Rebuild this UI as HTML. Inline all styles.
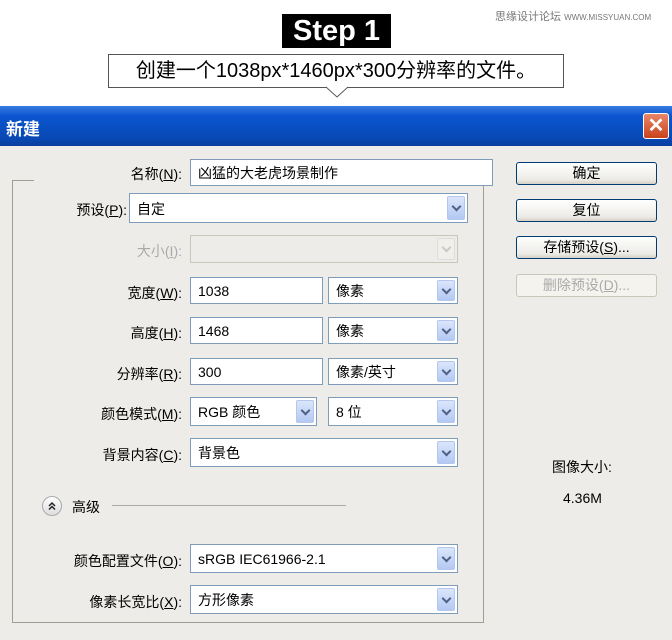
<!DOCTYPE html>
<html><head><meta charset="utf-8"><style>
*{margin:0;padding:0;box-sizing:border-box}
body{width:672px;height:640px;background:#fff;position:relative;overflow:hidden;font-family:"Liberation Sans","Noto Sans CJK SC",sans-serif;font-size:14px;color:#000}
.a{position:absolute}
.lbl{position:absolute;right:490px;text-align:right;white-space:nowrap;font-size:14px}
.in{position:absolute;background:#fff;border:1px solid #7f9db9;padding-left:7px;padding-top:2px;font-size:14px;white-space:nowrap}
.dd{position:absolute;right:2px;top:2px;bottom:2px;width:18px;background:linear-gradient(#dbe6fb,#b3c8f3);border:1px solid #b4c7ee;border-radius:2px}
.dd::after{content:"";position:absolute;left:5px;top:50%;margin-top:-5px;width:5px;height:5px;border-right:2px solid #4d6185;border-bottom:2px solid #4d6185;transform:rotate(45deg)}
.dis::after{border-color:#c8c8c8}
.btn{position:absolute;left:516px;width:141px;height:23px;border:1px solid #003c74;border-radius:3px;background:linear-gradient(#fff,#ecebe6 80%,#d6d0c5);text-align:center;font-size:14px;line-height:21px}
</style></head><body>
<div class="a" style="left:282px;top:14px;width:109px;height:34px;background:#000;color:#fff;font-weight:bold;font-size:29px;text-align:center;line-height:34px">Step 1</div>
<div class="a" style="left:495px;top:8px;font-size:11px;color:#777">思缘设计论坛 <span style="font-size:8px">WWW.MISSYUAN.COM</span></div>
<div class="a" style="left:108px;top:54px;width:456px;height:34px;border:1px solid #555;background:#fff;font-size:20px;text-align:center;line-height:32px">创建一个1038px*1460px*300分辨率的文件。</div>
<svg class="a" style="left:326px;top:86px" width="22" height="12"><path d="M0 1 L11 11 L22 1" fill="#fff" stroke="#555"/></svg>
<div class="a" style="left:0;top:106px;width:672px;height:40px;background:linear-gradient(#3a7be0,#0a55d0 25%,#0849b5 80%,#0a3e9c);"></div>
<div class="a" style="left:6px;top:115px;color:#fff;font-weight:bold;font-size:17px">新建</div>
<div class="a" style="left:643px;top:113px;width:26px;height:26px;background:linear-gradient(#e8866a,#c9431c);border:1px solid #fff;border-radius:3px;color:#fff;font-size:20px;font-weight:bold;text-align:center;line-height:24px">✕</div>
<div class="a" style="left:0;top:146px;width:672px;height:494px;background:#eeece8"></div>
<div class="a" style="left:12px;top:180px;width:472px;height:443px;border:1px solid #a09d94;border-top:none"></div>
<div class="a" style="left:12px;top:180px;width:22px;border-top:1px solid #a09d94"></div>
<div class="a" style="left:474px;top:180px;width:10px;border-top:1px solid #a09d94"></div>

<div class="lbl" style="top:164px">名称(<u>N</u>):</div>
<div class="in" style="left:190px;top:159px;width:303px;height:27px;line-height:23px">凶猛的大老虎场景制作</div>
<div class="lbl" style="top:200px;right:545px">预设(<u>P</u>):</div>
<div class="in" style="left:129px;top:193px;width:339px;height:30px;line-height:26px">自定<div class="dd"></div></div>
<div class="lbl" style="top:241px;color:#aaa">大小(<u>I</u>):</div>
<div class="in" style="left:190px;top:235px;width:268px;height:28px;background:#eeece8;border-color:#c9c7ba"><div class="dd dis" style="background:#f0efea;border-color:#ddd"></div></div>
<div class="lbl" style="top:283px">宽度(<u>W</u>):</div>
<div class="in" style="left:190px;top:277px;width:133px;height:27px;line-height:23px">1038</div>
<div class="in" style="left:328px;top:277px;width:130px;height:27px;line-height:23px">像素<div class="dd"></div></div>
<div class="lbl" style="top:323px">高度(<u>H</u>):</div>
<div class="in" style="left:190px;top:317px;width:133px;height:27px;line-height:23px">1468</div>
<div class="in" style="left:328px;top:317px;width:130px;height:27px;line-height:23px">像素<div class="dd"></div></div>
<div class="lbl" style="top:364px">分辨率(<u>R</u>):</div>
<div class="in" style="left:190px;top:358px;width:133px;height:27px;line-height:23px">300</div>
<div class="in" style="left:328px;top:358px;width:130px;height:27px;line-height:23px">像素/英寸<div class="dd"></div></div>
<div class="lbl" style="top:404px">颜色模式(<u>M</u>):</div>
<div class="in" style="left:190px;top:397px;width:127px;height:29px;line-height:25px">RGB 颜色<div class="dd"></div></div>
<div class="in" style="left:328px;top:397px;width:130px;height:29px;line-height:25px">8 位<div class="dd"></div></div>
<div class="lbl" style="top:445px">背景内容(<u>C</u>):</div>
<div class="in" style="left:190px;top:438px;width:268px;height:29px;line-height:25px">背景色<div class="dd"></div></div>
<div class="a" style="left:42px;top:496px;width:20px;height:20px;border-radius:50%;border:1px solid #aaa;background:linear-gradient(#fff,#ddd)"><svg width="18" height="18" style="position:absolute;left:0;top:0"><path d="M6 9 L9 6 L12 9 M6 12.5 L9 9.5 L12 12.5" fill="none" stroke="#222" stroke-width="1.5"/></svg></div>
<div class="a" style="left:72px;top:497px">高级</div>
<div class="a" style="left:112px;top:505px;width:234px;border-top:1px solid #aaa"></div>
<div class="lbl" style="top:551px">颜色配置文件(<u>O</u>):</div>
<div class="in" style="left:190px;top:544px;width:268px;height:29px;line-height:25px">sRGB IEC61966-2.1<div class="dd"></div></div>
<div class="lbl" style="top:592px">像素长宽比(<u>X</u>):</div>
<div class="in" style="left:190px;top:585px;width:268px;height:29px;line-height:25px">方形像素<div class="dd"></div></div>

<div class="btn" style="top:162px">确定</div>
<div class="btn" style="top:199px">复位</div>
<div class="btn" style="top:236px">存储预设(<u>S</u>)...</div>
<div class="btn" style="top:274px;border-color:#c9c7ba;color:#aaa;background:#f4f3ee">删除预设(<u>D</u>)...</div>
<div class="a" style="left:552px;top:457px">图像大小:</div>
<div class="a" style="left:563px;top:490px">4.36M</div>
</body></html>
